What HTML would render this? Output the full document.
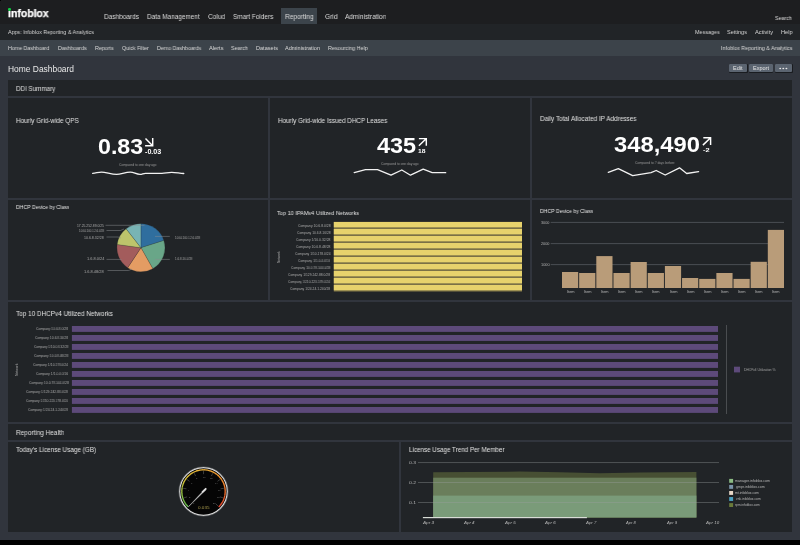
<!DOCTYPE html>
<html><head><meta charset="utf-8">
<style>
*{margin:0;padding:0;box-sizing:border-box}
html,body{width:800px;height:545px;overflow:hidden;background:#000}
body{font-family:"Liberation Sans",sans-serif;color:#e6e6e6;position:relative}
.a{position:absolute}
.t{position:absolute;white-space:nowrap;transform-origin:0 0;will-change:transform}
svg{position:absolute;left:0;top:0;overflow:visible}
</style></head><body>
<div class="a" style="left:0px;top:0px;width:800px;height:540px;background:#31353d;"></div>
<div class="a" style="left:0px;top:0px;width:800px;height:24px;background:#1d1e20;"></div>
<div class="a" style="left:0px;top:0px;width:1px;height:1px;background:#000;"></div>
<div class="a" style="left:0px;top:24px;width:800px;height:16px;background:#212427;"></div>
<div class="a" style="left:0px;top:40px;width:800px;height:16px;background:#3c434a;"></div>
<div class="t" style="left:7.77px;top:8.12px;font-size:10.610px;line-height:10.610px;font-weight:bold;color:#ffffff;transform:scaleX(0.9870);-webkit-text-stroke:0.25px #fff;">ınfoblox</div>
<div class="a" style="left:8.3px;top:8.3px;width:2.3px;height:2.3px;border-radius:50%;background:#12cc44"></div>
<div class="a" style="left:281px;top:8px;width:36px;height:16px;background:#3c444b;"></div>
<div class="t" style="left:103.63px;top:13.35px;font-size:7.267px;line-height:7.267px;font-weight:normal;color:#dcdcdc;transform:scaleX(0.8934);">Dashboards</div>
<div class="t" style="left:146.89px;top:13.35px;font-size:7.267px;line-height:7.267px;font-weight:normal;color:#dcdcdc;transform:scaleX(0.8824);">Data Management</div>
<div class="t" style="left:208.07px;top:13.35px;font-size:7.267px;line-height:7.267px;font-weight:normal;color:#dcdcdc;transform:scaleX(0.9027);">Colud</div>
<div class="t" style="left:232.91px;top:13.35px;font-size:7.267px;line-height:7.267px;font-weight:normal;color:#dcdcdc;transform:scaleX(0.8833);">Smart Folders</div>
<div class="t" style="left:284.97px;top:13.35px;font-size:7.267px;line-height:7.267px;font-weight:normal;color:#dcdcdc;transform:scaleX(0.9097);">Reporting</div>
<div class="t" style="left:325.07px;top:13.35px;font-size:7.267px;line-height:7.267px;font-weight:normal;color:#dcdcdc;transform:scaleX(0.9044);">Grid</div>
<div class="t" style="left:345.40px;top:13.35px;font-size:7.267px;line-height:7.267px;font-weight:normal;color:#dcdcdc;transform:scaleX(0.8991);">Administration</div>
<div class="t" style="left:774.96px;top:16.02px;font-size:5.523px;line-height:5.523px;font-weight:normal;color:#dcdcdc;transform:scaleX(0.9585);">Search</div>
<div class="t" style="left:8.10px;top:29.82px;font-size:5.523px;line-height:5.523px;font-weight:normal;color:#d4d4d4;transform:scaleX(0.9658);">Apps: Infoblox Reporting &amp; Analytics</div>
<div class="t" style="left:694.97px;top:29.82px;font-size:5.523px;line-height:5.523px;font-weight:normal;color:#d4d4d4;transform:scaleX(0.9776);">Messages</div>
<div class="t" style="left:726.96px;top:29.82px;font-size:5.523px;line-height:5.523px;font-weight:normal;color:#d4d4d4;transform:scaleX(0.9834);">Settings</div>
<div class="t" style="left:755.10px;top:29.82px;font-size:5.523px;line-height:5.523px;font-weight:normal;color:#d4d4d4;transform:scaleX(1.0346);">Activity</div>
<div class="t" style="left:780.65px;top:29.82px;font-size:5.523px;line-height:5.523px;font-weight:normal;color:#d4d4d4;transform:scaleX(1.0292);">Help</div>
<div class="t" style="left:8.08px;top:45.82px;font-size:5.523px;line-height:5.523px;font-weight:normal;color:#d8d8d8;transform:scaleX(0.9564);">Home Dashboard</div>
<div class="t" style="left:58.07px;top:45.82px;font-size:5.523px;line-height:5.523px;font-weight:normal;color:#d8d8d8;transform:scaleX(0.9662);">Dashboards</div>
<div class="t" style="left:94.97px;top:45.82px;font-size:5.523px;line-height:5.523px;font-weight:normal;color:#d8d8d8;transform:scaleX(0.9681);">Reports</div>
<div class="t" style="left:122.06px;top:45.82px;font-size:5.523px;line-height:5.523px;font-weight:normal;color:#d8d8d8;transform:scaleX(0.9632);">Quick Filter</div>
<div class="t" style="left:156.87px;top:45.82px;font-size:5.523px;line-height:5.523px;font-weight:normal;color:#d8d8d8;transform:scaleX(0.9619);">Demo Dashboards</div>
<div class="t" style="left:209.15px;top:45.82px;font-size:5.523px;line-height:5.523px;font-weight:normal;color:#d8d8d8;transform:scaleX(1.0310);">Alerts</div>
<div class="t" style="left:231.16px;top:45.82px;font-size:5.523px;line-height:5.523px;font-weight:normal;color:#d8d8d8;transform:scaleX(0.9615);">Search</div>
<div class="t" style="left:255.70px;top:45.82px;font-size:5.523px;line-height:5.523px;font-weight:normal;color:#d8d8d8;transform:scaleX(1.0093);">Datasets</div>
<div class="t" style="left:285.40px;top:45.82px;font-size:5.523px;line-height:5.523px;font-weight:normal;color:#d8d8d8;transform:scaleX(0.9868);">Administration</div>
<div class="t" style="left:327.87px;top:45.82px;font-size:5.523px;line-height:5.523px;font-weight:normal;color:#d8d8d8;transform:scaleX(0.9737);">Resourcing Help</div>
<div class="t" style="left:720.72px;top:45.82px;font-size:5.523px;line-height:5.523px;font-weight:normal;color:#d8d8d8;transform:scaleX(0.9754);">Infoblox Reporting &amp; Analytics</div>
<div class="t" style="left:8.22px;top:64.56px;font-size:8.430px;line-height:8.430px;font-weight:normal;color:#e8e8e8;">Home Dashboard</div>
<div class="a" style="left:728.5px;top:63.5px;width:19px;height:9px;background:#1a1c20;border-radius:1px"></div>
<div class="a" style="left:729px;top:64px;width:18px;height:8px;background:#5b6470;border-radius:1px"></div>
<div class="a" style="left:748.5px;top:63.5px;width:24.799999999999955px;height:9px;background:#1a1c20;border-radius:1px"></div>
<div class="a" style="left:749px;top:64px;width:23.8px;height:8px;background:#5b6470;border-radius:1px"></div>
<div class="a" style="left:774.5px;top:63.5px;width:18px;height:9px;background:#1a1c20;border-radius:1px"></div>
<div class="a" style="left:775px;top:64px;width:17px;height:8px;background:#5b6470;border-radius:1px"></div>
<div class="t" style="left:732.96px;top:66.32px;font-size:5.523px;line-height:5.523px;font-weight:normal;color:#e6e6e6;">Edit</div>
<div class="t" style="left:752.96px;top:66.32px;font-size:5.523px;line-height:5.523px;font-weight:normal;color:#e6e6e6;">Export</div>
<svg width="800" height="545"><g fill="#e8e8e8"><ellipse cx="780.2" cy="68.5" rx="0.95" ry="0.75"/><ellipse cx="783.3" cy="68.5" rx="0.95" ry="0.75"/><ellipse cx="786.4" cy="68.5" rx="0.95" ry="0.75"/></g></svg>
<div class="a" style="left:8px;top:80px;width:784px;height:16px;background:#212427;"></div>
<div class="t" style="left:15.70px;top:85.96px;font-size:6.541px;line-height:6.541px;font-weight:normal;color:#e0e0e0;transform:scaleX(0.9566);">DDI Summary</div>
<div class="a" style="left:8px;top:98px;width:260px;height:100px;background:#212427;"></div>
<div class="a" style="left:8px;top:200px;width:260px;height:100px;background:#212427;"></div>
<div class="a" style="left:270px;top:98px;width:260px;height:100px;background:#212427;"></div>
<div class="a" style="left:270px;top:200px;width:260px;height:100px;background:#212427;"></div>
<div class="a" style="left:532px;top:98px;width:260px;height:100px;background:#212427;"></div>
<div class="a" style="left:532px;top:200px;width:260px;height:100px;background:#212427;"></div>
<div class="a" style="left:8px;top:302px;width:784px;height:120px;background:#212427;"></div>
<div class="a" style="left:8px;top:424px;width:784px;height:16px;background:#212427;"></div>
<div class="t" style="left:16.49px;top:429.66px;font-size:6.904px;line-height:6.904px;font-weight:normal;color:#e0e0e0;transform:scaleX(0.9322);">Reporting Health</div>
<div class="a" style="left:8px;top:442px;width:391px;height:90px;background:#212427;"></div>
<div class="a" style="left:401px;top:442px;width:391px;height:90px;background:#212427;"></div>
<div class="t" style="left:16.09px;top:118.47px;font-size:7.122px;line-height:7.122px;font-weight:normal;color:#e2e2e2;transform:scaleX(0.8965);">Hourly Grid-wide QPS</div>
<div class="t" style="left:277.89px;top:117.67px;font-size:7.122px;line-height:7.122px;font-weight:normal;color:#e2e2e2;transform:scaleX(0.8899);">Hourly Grid-wide Issued DHCP Leases</div>
<div class="t" style="left:540.29px;top:116.32px;font-size:6.831px;line-height:6.831px;font-weight:normal;color:#e2e2e2;transform:scaleX(0.9368);">Daily Total Allocated IP Addresses</div>
<div class="t" style="left:97.97px;top:136.29px;font-size:21.221px;line-height:21.221px;font-weight:bold;color:#ffffff;transform:scaleX(1.0937);">0.83</div>
<div class="t" style="left:144.91px;top:148.76px;font-size:6.541px;line-height:6.541px;font-weight:bold;color:#ffffff;transform:scaleX(1.0955);">-0.03</div>
<div class="t" style="left:376.65px;top:135.04px;font-size:21.221px;line-height:21.221px;font-weight:bold;color:#ffffff;transform:scaleX(1.1049);">435</div>
<div class="t" style="left:417.99px;top:148.01px;font-size:6.250px;line-height:6.250px;font-weight:bold;color:#ffffff;transform:scaleX(1.0824);">18</div>
<div class="t" style="left:614.32px;top:134.34px;font-size:21.221px;line-height:21.221px;font-weight:bold;color:#ffffff;transform:scaleX(1.1201);">348,490</div>
<div class="t" style="left:703.10px;top:147.98px;font-size:5.814px;line-height:5.814px;font-weight:bold;color:#ffffff;transform:scaleX(1.2741);">-2</div>
<div class="t" style="left:119.34px;top:163.85px;font-size:3.488px;line-height:3.488px;font-weight:normal;color:#9a9a9a;transform:scaleX(0.9343);">Compared to one day ago</div>
<div class="t" style="left:381.24px;top:162.55px;font-size:3.488px;line-height:3.488px;font-weight:normal;color:#9a9a9a;transform:scaleX(0.9368);">Compared to one day ago</div>
<div class="t" style="left:635.04px;top:161.75px;font-size:3.488px;line-height:3.488px;font-weight:normal;color:#9a9a9a;transform:scaleX(0.9393);">Compared to 7 days before</div>
<svg width="800" height="545"><g stroke="#fff" stroke-width="1.45" fill="none" stroke-linecap="butt"><path d="M145.5 138.6 L152.4 145.5 M145.1 145.8 H153.3 M152.7 138.1 V146.4"/><path d="M418.9 145.7 L426.1 138.7 M418.9 138.6 H427.0 M426.3 138.0 V145.8"/><path d="M702.9 145.1 L710.6 137.8 M703.3 137.8 H711.2 M710.6 137.2 V144.9"/></g><g stroke="#f2f2f2" stroke-width="1.3" fill="none" stroke-linejoin="round" stroke-linecap="round"><path d="M92.6 173.3 C96 173.2 98 172.1 101.5 172.1 C106 172.1 111 174.4 116.6 174.4 C121 174.4 125 172.1 130.4 172.1 C134 172.1 136 174.4 140 174.4 C142.5 174.4 143 173.3 145.5 173.3 L162 173.3 C165 173.3 168 172.4 171.7 172.4 C176 172.4 180 173.5 183.8 173.5"/><path d="M354.2 172.7 L365.5 169.7 L377.5 169.7 L391 175.2 L401.8 170 L410.5 175.2 L423.2 169.2 L432.2 172.7 L445.7 172.7"/><path d="M608.25 172.3 L618.3 168.7 L632.7 175.7 L651 172.7 L656.2 170.5 L665.2 175 L679.5 167.8 L686.7 173.5 L698.6 171.7"/></g></svg>
<div class="t" style="left:15.98px;top:204.66px;font-size:5.959px;line-height:5.959px;font-weight:normal;color:#e2e2e2;transform:scaleX(0.8767);">DHCP Device by Class</div>
<svg width="800" height="545"><path d="M140.95 247.75 L140.95 223.75 A24 24 0 0 1 163.81 240.45 Z" fill="#2f6e9e" stroke="#2a2d30" stroke-width="0.2"/><path d="M140.95 247.75 L163.81 240.45 A24 24 0 0 1 152.77 268.64 Z" fill="#69a688" stroke="#2a2d30" stroke-width="0.2"/><path d="M140.95 247.75 L152.77 268.64 A24 24 0 0 1 127.70 267.76 Z" fill="#e49c63" stroke="#2a2d30" stroke-width="0.2"/><path d="M140.95 247.75 L127.70 267.76 A24 24 0 0 1 117.18 244.45 Z" fill="#a35c5c" stroke="#2a2d30" stroke-width="0.2"/><path d="M140.95 247.75 L117.18 244.45 A24 24 0 0 1 126.17 228.84 Z" fill="#bdc46b" stroke="#2a2d30" stroke-width="0.2"/><path d="M140.95 247.75 L126.17 228.84 A24 24 0 0 1 140.95 223.75 Z" fill="#78b4b4" stroke="#2a2d30" stroke-width="0.2"/><g stroke="#8a8d90" stroke-width="0.5" fill="none"><path d="M105.5 225.3 H144.5 M106.5 230.5 H120.5 L124 229 M106.5 237 H118 L121 238 M106.5 259.4 H121.5 M107.5 270.5 H128.5 L132 269 M155 236.4 H169.8 M155 259.4 H169.8"/></g><rect x="333.8" y="221.9" width="188.2" height="69.7" fill="#756c45"/><rect x="333.8" y="221.95" width="188.2" height="5.4" fill="#e7d26c"/><rect x="333.8" y="228.95" width="188.2" height="5.4" fill="#e7d26c"/><rect x="333.8" y="235.95" width="188.2" height="5.4" fill="#e7d26c"/><rect x="333.8" y="242.95" width="188.2" height="5.4" fill="#e7d26c"/><rect x="333.8" y="249.95" width="188.2" height="5.4" fill="#e7d26c"/><rect x="333.8" y="256.95" width="188.2" height="5.4" fill="#e7d26c"/><rect x="333.8" y="263.95" width="188.2" height="5.4" fill="#e7d26c"/><rect x="333.8" y="270.95" width="188.2" height="5.4" fill="#e7d26c"/><rect x="333.8" y="277.95" width="188.2" height="5.4" fill="#e7d26c"/><rect x="333.8" y="284.95" width="188.2" height="5.4" fill="#e7d26c"/><rect x="550.7" y="221.9" width="233.3" height="1" fill="#4a4e54"/><rect x="550.7" y="243.1" width="233.3" height="1" fill="#4a4e54"/><rect x="550.7" y="264.1" width="233.3" height="1" fill="#4a4e54"/><rect x="562.00" y="272" width="16.2" height="16.0" fill="#b99c79"/><rect x="579.15" y="273" width="16.2" height="15.0" fill="#b99c79"/><rect x="596.30" y="256.1" width="16.2" height="31.9" fill="#b99c79"/><rect x="613.45" y="273" width="16.2" height="15.0" fill="#b99c79"/><rect x="630.60" y="262" width="16.2" height="26.0" fill="#b99c79"/><rect x="647.75" y="273" width="16.2" height="15.0" fill="#b99c79"/><rect x="664.90" y="266" width="16.2" height="22.0" fill="#b99c79"/><rect x="682.05" y="278" width="16.2" height="10.0" fill="#b99c79"/><rect x="699.20" y="278.9" width="16.2" height="9.1" fill="#b99c79"/><rect x="716.35" y="273" width="16.2" height="15.0" fill="#b99c79"/><rect x="733.50" y="278.9" width="16.2" height="9.1" fill="#b99c79"/><rect x="750.65" y="261.8" width="16.2" height="26.2" fill="#b99c79"/><rect x="767.80" y="229.9" width="16.2" height="58.1" fill="#b99c79"/></svg>
<div class="t" style="left:77.15px;top:224.72px;font-size:3.052px;line-height:3.052px;font-weight:normal;color:#a8a8a8;transform:scaleX(1.0969);">17.25.252.89.0/25</div>
<div class="t" style="left:78.94px;top:230.47px;font-size:3.052px;line-height:3.052px;font-weight:normal;color:#a8a8a8;transform:scaleX(0.8986);">10.64.100.1.2.6.0/28</div>
<div class="t" style="left:84.48px;top:236.62px;font-size:3.052px;line-height:3.052px;font-weight:normal;color:#a8a8a8;transform:scaleX(1.1582);">10.6.8.32/28</div>
<div class="t" style="left:86.71px;top:258.47px;font-size:3.052px;line-height:3.052px;font-weight:normal;color:#a8a8a8;transform:scaleX(1.2818);">1.6.8.0/24</div>
<div class="t" style="left:84.45px;top:270.72px;font-size:3.052px;line-height:3.052px;font-weight:normal;color:#a8a8a8;transform:scaleX(1.2897);">1.6.8.48/28</div>
<div class="t" style="left:174.89px;top:236.62px;font-size:3.052px;line-height:3.052px;font-weight:normal;color:#a8a8a8;transform:scaleX(0.8968);">10.64.100.1.2.6.0/28</div>
<div class="t" style="left:174.88px;top:258.47px;font-size:3.052px;line-height:3.052px;font-weight:normal;color:#a8a8a8;transform:scaleX(0.9680);">1.6.8.16.0/28</div>
<div class="t" style="left:277.24px;top:209.57px;font-size:6.177px;line-height:6.177px;font-weight:normal;color:#e2e2e2;transform:scaleX(0.9063);">Top 10 IPAMv4 Utilized Networks</div>
<div class="t" style="left:297.73px;top:225.17px;font-size:3.343px;line-height:3.343px;font-weight:normal;color:#aaaaaa;transform:scaleX(1.0266);">Company 10.6.8.0/28</div>
<div class="t" style="left:296.83px;top:232.17px;font-size:3.343px;line-height:3.343px;font-weight:normal;color:#aaaaaa;">Company 10.6.8.16/28</div>
<div class="t" style="left:295.93px;top:239.17px;font-size:3.343px;line-height:3.343px;font-weight:normal;color:#aaaaaa;transform:scaleX(1.0235);">Company 1/10.0.32/28</div>
<div class="t" style="left:295.93px;top:246.17px;font-size:3.343px;line-height:3.343px;font-weight:normal;color:#aaaaaa;transform:scaleX(1.0235);">Company 10.0.8.48/28</div>
<div class="t" style="left:295.03px;top:253.17px;font-size:3.343px;line-height:3.343px;font-weight:normal;color:#aaaaaa;transform:scaleX(0.9933);">Company 1/10.178.0/24</div>
<div class="t" style="left:298.14px;top:260.17px;font-size:3.343px;line-height:3.343px;font-weight:normal;color:#aaaaaa;transform:scaleX(0.9848);">Company 1/1.0.4.0/16</div>
<div class="t" style="left:290.84px;top:267.17px;font-size:3.343px;line-height:3.343px;font-weight:normal;color:#aaaaaa;transform:scaleX(0.9842);">Company 10.0.78.144.0/28</div>
<div class="t" style="left:288.23px;top:274.17px;font-size:3.343px;line-height:3.343px;font-weight:normal;color:#aaaaaa;">Company 1/129.242.88.0/28</div>
<div class="t" style="left:288.24px;top:281.17px;font-size:3.343px;line-height:3.343px;font-weight:normal;color:#aaaaaa;transform:scaleX(0.9590);">Company 1/210.223.178.0/24</div>
<div class="t" style="left:290.03px;top:288.17px;font-size:3.343px;line-height:3.343px;font-weight:normal;color:#aaaaaa;">Company 1/24.24.1.240/28</div>
<div class="t" style="left:277.8px;top:263.3px;font-size:3.2px;line-height:3.2px;color:#aaa;transform:rotate(-90deg);transform-origin:0 0">Network</div>
<div class="t" style="left:540.28px;top:209.46px;font-size:5.959px;line-height:5.959px;font-weight:normal;color:#e2e2e2;transform:scaleX(0.8733);">DHCP Device by Class</div>
<div class="t" style="left:540.97px;top:222.17px;font-size:3.343px;line-height:3.343px;font-weight:normal;color:#b0b0b0;transform:scaleX(1.1382);">3000</div>
<div class="t" style="left:540.91px;top:243.17px;font-size:3.343px;line-height:3.343px;font-weight:normal;color:#b0b0b0;transform:scaleX(1.1462);">2000</div>
<div class="t" style="left:540.81px;top:264.17px;font-size:3.343px;line-height:3.343px;font-weight:normal;color:#b0b0b0;transform:scaleX(1.1597);">1000</div>
<div class="t" style="left:566.65px;top:290.69px;font-size:3.198px;line-height:3.198px;font-weight:normal;color:#b8b8b8;transform:scaleX(1.2230);">Item</div>
<div class="t" style="left:583.80px;top:290.69px;font-size:3.198px;line-height:3.198px;font-weight:normal;color:#b8b8b8;transform:scaleX(1.2230);">Item</div>
<div class="t" style="left:600.95px;top:290.69px;font-size:3.198px;line-height:3.198px;font-weight:normal;color:#b8b8b8;transform:scaleX(1.2230);">Item</div>
<div class="t" style="left:618.10px;top:290.69px;font-size:3.198px;line-height:3.198px;font-weight:normal;color:#b8b8b8;transform:scaleX(1.2230);">Item</div>
<div class="t" style="left:635.25px;top:290.69px;font-size:3.198px;line-height:3.198px;font-weight:normal;color:#b8b8b8;transform:scaleX(1.2230);">Item</div>
<div class="t" style="left:652.40px;top:290.69px;font-size:3.198px;line-height:3.198px;font-weight:normal;color:#b8b8b8;transform:scaleX(1.2230);">Item</div>
<div class="t" style="left:669.55px;top:290.69px;font-size:3.198px;line-height:3.198px;font-weight:normal;color:#b8b8b8;transform:scaleX(1.2230);">Item</div>
<div class="t" style="left:686.70px;top:290.69px;font-size:3.198px;line-height:3.198px;font-weight:normal;color:#b8b8b8;transform:scaleX(1.2230);">Item</div>
<div class="t" style="left:703.85px;top:290.69px;font-size:3.198px;line-height:3.198px;font-weight:normal;color:#b8b8b8;transform:scaleX(1.2230);">Item</div>
<div class="t" style="left:721.00px;top:290.69px;font-size:3.198px;line-height:3.198px;font-weight:normal;color:#b8b8b8;transform:scaleX(1.2230);">Item</div>
<div class="t" style="left:738.15px;top:290.69px;font-size:3.198px;line-height:3.198px;font-weight:normal;color:#b8b8b8;transform:scaleX(1.2230);">Item</div>
<div class="t" style="left:755.30px;top:290.69px;font-size:3.198px;line-height:3.198px;font-weight:normal;color:#b8b8b8;transform:scaleX(1.2230);">Item</div>
<div class="t" style="left:772.45px;top:290.69px;font-size:3.198px;line-height:3.198px;font-weight:normal;color:#b8b8b8;transform:scaleX(1.2230);">Item</div>
<div class="t" style="left:15.54px;top:310.72px;font-size:7.122px;line-height:7.122px;font-weight:normal;color:#e2e2e2;transform:scaleX(0.8986);">Top 10 DHCPv4 Utilized Networks</div>
<svg width="800" height="545"><rect x="71.9" y="326" width="646.1" height="5.9" fill="#5d4a7a"/><rect x="71.9" y="335" width="646.1" height="5.9" fill="#5d4a7a"/><rect x="71.9" y="344" width="646.1" height="5.9" fill="#5d4a7a"/><rect x="71.9" y="353" width="646.1" height="5.9" fill="#5d4a7a"/><rect x="71.9" y="362" width="646.1" height="5.9" fill="#5d4a7a"/><rect x="71.9" y="371" width="646.1" height="5.9" fill="#5d4a7a"/><rect x="71.9" y="380" width="646.1" height="5.9" fill="#5d4a7a"/><rect x="71.9" y="389" width="646.1" height="5.9" fill="#5d4a7a"/><rect x="71.9" y="398" width="646.1" height="5.9" fill="#5d4a7a"/><rect x="71.9" y="407" width="646.1" height="5.9" fill="#5d4a7a"/><rect x="726.2" y="325" width="0.8" height="89" fill="#55585c"/><rect x="734" y="366.7" width="6" height="5.7" fill="#5d4a7a"/></svg>
<div class="t" style="left:36.23px;top:327.95px;font-size:3.488px;line-height:3.488px;font-weight:normal;color:#ababab;transform:scaleX(0.9687);">Company 10.6.8.0/28</div>
<div class="t" style="left:35.24px;top:336.95px;font-size:3.488px;line-height:3.488px;font-weight:normal;color:#ababab;transform:scaleX(0.9436);">Company 10.6.8.16/28</div>
<div class="t" style="left:33.94px;top:345.95px;font-size:3.488px;line-height:3.488px;font-weight:normal;color:#ababab;transform:scaleX(0.9054);">Company 1/10.0.8.32/28</div>
<div class="t" style="left:33.93px;top:354.95px;font-size:3.488px;line-height:3.488px;font-weight:normal;color:#ababab;transform:scaleX(0.9808);">Company 10.0.8.48/28</div>
<div class="t" style="left:33.23px;top:363.95px;font-size:3.488px;line-height:3.488px;font-weight:normal;color:#ababab;transform:scaleX(0.9465);">Company 1/10.178.0/24</div>
<div class="t" style="left:36.24px;top:372.95px;font-size:3.488px;line-height:3.488px;font-weight:normal;color:#ababab;transform:scaleX(0.9409);">Company 1/1.0.4.0/16</div>
<div class="t" style="left:28.53px;top:381.95px;font-size:3.488px;line-height:3.488px;font-weight:normal;color:#ababab;transform:scaleX(0.9504);">Company 10.0.78.144.0/28</div>
<div class="t" style="left:26.23px;top:390.95px;font-size:3.488px;line-height:3.488px;font-weight:normal;color:#ababab;transform:scaleX(0.9609);">Company 1/129.242.88.0/28</div>
<div class="t" style="left:26.24px;top:399.95px;font-size:3.488px;line-height:3.488px;font-weight:normal;color:#ababab;transform:scaleX(0.9191);">Company 1/210.223.178.0/24</div>
<div class="t" style="left:28.13px;top:408.95px;font-size:3.488px;line-height:3.488px;font-weight:normal;color:#ababab;transform:scaleX(0.9599);">Company 1/24.24.1.240/28</div>
<div class="t" style="left:16.4px;top:375.5px;font-size:3.4px;line-height:3.4px;color:#aaa;transform:rotate(-90deg);transform-origin:0 0">Network</div>
<div class="t" style="left:744.14px;top:369.15px;font-size:3.488px;line-height:3.488px;font-weight:normal;color:#a4a4a4;transform:scaleX(0.9361);">DHCPv4 Utilization %</div>
<div class="t" style="left:15.55px;top:446.64px;font-size:6.686px;line-height:6.686px;font-weight:normal;color:#e2e2e2;transform:scaleX(0.9494);">Today's License Usage (GB)</div>
<div class="t" style="left:409.40px;top:447.04px;font-size:6.686px;line-height:6.686px;font-weight:normal;color:#e2e2e2;transform:scaleX(0.9388);">License Usage Trend Per Member</div>
<svg width="800" height="545"><circle cx="203.5" cy="491.5" r="23.8" fill="#050505" stroke="#e2e2e2" stroke-width="1.2"/><circle cx="203.5" cy="491.5" r="24.6" fill="none" stroke="#77797b" stroke-width="0.5"/><path d="M188.16 506.84 A21.7 21.7 0 0 1 186.73 505.27" stroke="rgb(99, 186, 75)" stroke-width="1.35" fill="none"/><path d="M186.88 505.45 A21.7 21.7 0 0 1 185.60 503.76" stroke="rgb(105, 187, 74)" stroke-width="1.35" fill="none"/><path d="M185.72 503.95 A21.7 21.7 0 0 1 184.59 502.15" stroke="rgb(111, 189, 73)" stroke-width="1.35" fill="none"/><path d="M184.71 502.35 A21.7 21.7 0 0 1 183.74 500.46" stroke="rgb(118, 190, 72)" stroke-width="1.35" fill="none"/><path d="M183.83 500.67 A21.7 21.7 0 0 1 183.03 498.71" stroke="rgb(124, 192, 72)" stroke-width="1.35" fill="none"/><path d="M183.11 498.92 A21.7 21.7 0 0 1 182.48 496.90" stroke="rgb(131, 193, 71)" stroke-width="1.35" fill="none"/><path d="M182.54 497.12 A21.7 21.7 0 0 1 182.09 495.04" stroke="rgb(137, 194, 70)" stroke-width="1.35" fill="none"/><path d="M182.13 495.27 A21.7 21.7 0 0 1 181.86 493.16" stroke="rgb(145, 195, 69)" stroke-width="1.35" fill="none"/><path d="M181.88 493.39 A21.7 21.7 0 0 1 181.80 491.27" stroke="rgb(155, 195, 68)" stroke-width="1.35" fill="none"/><path d="M181.80 491.50 A21.7 21.7 0 0 1 181.90 489.38" stroke="rgb(164, 195, 67)" stroke-width="1.35" fill="none"/><path d="M181.88 489.61 A21.7 21.7 0 0 1 182.17 487.51" stroke="rgb(173, 195, 66)" stroke-width="1.35" fill="none"/><path d="M182.13 487.73 A21.7 21.7 0 0 1 182.60 485.66" stroke="rgb(183, 195, 64)" stroke-width="1.35" fill="none"/><path d="M182.54 485.88 A21.7 21.7 0 0 1 183.19 483.87" stroke="rgb(192, 195, 63)" stroke-width="1.35" fill="none"/><path d="M183.11 484.08 A21.7 21.7 0 0 1 183.93 482.12" stroke="rgb(202, 195, 62)" stroke-width="1.35" fill="none"/><path d="M183.83 482.33 A21.7 21.7 0 0 1 184.82 480.45" stroke="rgb(211, 195, 61)" stroke-width="1.35" fill="none"/><path d="M184.71 480.65 A21.7 21.7 0 0 1 185.86 478.87" stroke="rgb(216, 194, 60)" stroke-width="1.35" fill="none"/><path d="M185.72 479.05 A21.7 21.7 0 0 1 187.02 477.38" stroke="rgb(218, 192, 59)" stroke-width="1.35" fill="none"/><path d="M186.88 477.55 A21.7 21.7 0 0 1 188.32 476.00" stroke="rgb(219, 191, 59)" stroke-width="1.35" fill="none"/><path d="M188.16 476.16 A21.7 21.7 0 0 1 189.73 474.73" stroke="rgb(221, 189, 59)" stroke-width="1.35" fill="none"/><path d="M189.55 474.88 A21.7 21.7 0 0 1 191.24 473.60" stroke="rgb(223, 187, 58)" stroke-width="1.35" fill="none"/><path d="M191.05 473.72 A21.7 21.7 0 0 1 192.85 472.59" stroke="rgb(224, 186, 58)" stroke-width="1.35" fill="none"/><path d="M192.65 472.71 A21.7 21.7 0 0 1 194.54 471.74" stroke="rgb(226, 184, 57)" stroke-width="1.35" fill="none"/><path d="M194.33 471.83 A21.7 21.7 0 0 1 196.29 471.03" stroke="rgb(228, 182, 57)" stroke-width="1.35" fill="none"/><path d="M196.08 471.11 A21.7 21.7 0 0 1 198.10 470.48" stroke="rgb(229, 181, 56)" stroke-width="1.35" fill="none"/><path d="M197.88 470.54 A21.7 21.7 0 0 1 199.96 470.09" stroke="rgb(231, 179, 56)" stroke-width="1.35" fill="none"/><path d="M199.73 470.13 A21.7 21.7 0 0 1 201.84 469.86" stroke="rgb(233, 177, 56)" stroke-width="1.35" fill="none"/><path d="M201.61 469.88 A21.7 21.7 0 0 1 203.73 469.80" stroke="rgb(234, 176, 55)" stroke-width="1.35" fill="none"/><path d="M203.50 469.80 A21.7 21.7 0 0 1 205.62 469.90" stroke="rgb(235, 173, 55)" stroke-width="1.35" fill="none"/><path d="M205.39 469.88 A21.7 21.7 0 0 1 207.49 470.17" stroke="rgb(236, 170, 54)" stroke-width="1.35" fill="none"/><path d="M207.27 470.13 A21.7 21.7 0 0 1 209.34 470.60" stroke="rgb(236, 168, 53)" stroke-width="1.35" fill="none"/><path d="M209.12 470.54 A21.7 21.7 0 0 1 211.13 471.19" stroke="rgb(236, 165, 52)" stroke-width="1.35" fill="none"/><path d="M210.92 471.11 A21.7 21.7 0 0 1 212.88 471.93" stroke="rgb(237, 162, 51)" stroke-width="1.35" fill="none"/><path d="M212.67 471.83 A21.7 21.7 0 0 1 214.55 472.82" stroke="rgb(237, 159, 50)" stroke-width="1.35" fill="none"/><path d="M214.35 472.71 A21.7 21.7 0 0 1 216.13 473.86" stroke="rgb(238, 156, 50)" stroke-width="1.35" fill="none"/><path d="M215.95 473.72 A21.7 21.7 0 0 1 217.62 475.02" stroke="rgb(238, 153, 49)" stroke-width="1.35" fill="none"/><path d="M217.45 474.88 A21.7 21.7 0 0 1 219.00 476.32" stroke="rgb(239, 150, 48)" stroke-width="1.35" fill="none"/><path d="M218.84 476.16 A21.7 21.7 0 0 1 220.27 477.73" stroke="rgb(239, 147, 47)" stroke-width="1.35" fill="none"/><path d="M220.12 477.55 A21.7 21.7 0 0 1 221.40 479.24" stroke="rgb(239, 144, 46)" stroke-width="1.35" fill="none"/><path d="M221.28 479.05 A21.7 21.7 0 0 1 222.41 480.85" stroke="rgb(240, 141, 45)" stroke-width="1.35" fill="none"/><path d="M222.29 480.65 A21.7 21.7 0 0 1 223.26 482.54" stroke="rgb(240, 138, 45)" stroke-width="1.35" fill="none"/><path d="M223.17 482.33 A21.7 21.7 0 0 1 223.97 484.29" stroke="rgb(239, 133, 45)" stroke-width="1.35" fill="none"/><path d="M223.89 484.08 A21.7 21.7 0 0 1 224.52 486.10" stroke="rgb(239, 129, 45)" stroke-width="1.35" fill="none"/><path d="M224.46 485.88 A21.7 21.7 0 0 1 224.91 487.96" stroke="rgb(238, 124, 45)" stroke-width="1.35" fill="none"/><path d="M224.87 487.73 A21.7 21.7 0 0 1 225.14 489.84" stroke="rgb(237, 120, 45)" stroke-width="1.35" fill="none"/><path d="M225.12 489.61 A21.7 21.7 0 0 1 225.20 491.73" stroke="rgb(237, 115, 45)" stroke-width="1.35" fill="none"/><path d="M225.20 491.50 A21.7 21.7 0 0 1 225.10 493.62" stroke="rgb(236, 111, 45)" stroke-width="1.35" fill="none"/><path d="M225.12 493.39 A21.7 21.7 0 0 1 224.83 495.49" stroke="rgb(236, 106, 45)" stroke-width="1.35" fill="none"/><path d="M224.87 495.27 A21.7 21.7 0 0 1 224.40 497.34" stroke="rgb(235, 102, 45)" stroke-width="1.35" fill="none"/><path d="M224.46 497.12 A21.7 21.7 0 0 1 223.81 499.13" stroke="rgb(234, 97, 45)" stroke-width="1.35" fill="none"/><path d="M223.89 498.92 A21.7 21.7 0 0 1 223.07 500.88" stroke="rgb(231, 91, 45)" stroke-width="1.35" fill="none"/><path d="M223.17 500.67 A21.7 21.7 0 0 1 222.18 502.55" stroke="rgb(229, 85, 45)" stroke-width="1.35" fill="none"/><path d="M222.29 502.35 A21.7 21.7 0 0 1 221.14 504.13" stroke="rgb(226, 79, 45)" stroke-width="1.35" fill="none"/><path d="M221.28 503.95 A21.7 21.7 0 0 1 219.98 505.62" stroke="rgb(224, 73, 45)" stroke-width="1.35" fill="none"/><path d="M220.12 505.45 A21.7 21.7 0 0 1 218.68 507.00" stroke="rgb(221, 68, 45)" stroke-width="1.35" fill="none"/><path d="M191.27 503.73 L188.93 506.07 M187.05 496.85 L183.91 497.87 M186.41 488.79 L183.15 488.28 M189.50 481.33 L186.83 479.39 M195.65 476.09 L194.15 473.15 M203.50 474.20 L203.50 470.90 M211.35 476.09 L212.85 473.15 M217.50 481.33 L220.17 479.39 M220.59 488.79 L223.85 488.28 M219.95 496.85 L223.09 497.87 M215.73 503.73 L218.07 506.07" stroke="#8c8c8c" stroke-width="0.4"/><path d="M188.0 507.2 L204.4 489.4 L206.2 488.5 L205.5 490.3 Z" fill="#cfcfcf" stroke="#cfcfcf" stroke-width="0.3" stroke-linejoin="round"/><path d="M201.5 491.8 L205.6 487.7 L206.8 488.9 L202.7 493.0 Z" fill="#dedede"/></svg>
<div class="t" style="left:192.51px;top:501.70px;font-size:2.180px;line-height:2.180px;font-weight:normal;color:#777777;transform:scaleX(1.0511);">0</div>
<div class="t" style="left:188.77px;top:495.65px;font-size:2.180px;line-height:2.180px;font-weight:normal;color:#777777;transform:scaleX(1.1089);">2</div>
<div class="t" style="left:188.29px;top:488.58px;font-size:2.180px;line-height:2.180px;font-weight:normal;color:#777777;transform:scaleX(0.9893);">4</div>
<div class="t" style="left:190.93px;top:482.02px;font-size:2.180px;line-height:2.180px;font-weight:normal;color:#777777;transform:scaleX(1.0850);">6</div>
<div class="t" style="left:196.36px;top:477.41px;font-size:2.180px;line-height:2.180px;font-weight:normal;color:#777777;transform:scaleX(1.0622);">8</div>
<div class="t" style="left:202.64px;top:475.75px;font-size:2.180px;line-height:2.180px;font-weight:normal;color:#777777;transform:scaleX(1.0091);">10</div>
<div class="t" style="left:209.53px;top:477.41px;font-size:2.180px;line-height:2.180px;font-weight:normal;color:#777777;transform:scaleX(1.0244);">12</div>
<div class="t" style="left:214.93px;top:482.02px;font-size:2.180px;line-height:2.180px;font-weight:normal;color:#777777;">14</div>
<div class="t" style="left:217.65px;top:488.58px;font-size:2.180px;line-height:2.180px;font-weight:normal;color:#777777;transform:scaleX(1.0141);">16</div>
<div class="t" style="left:217.09px;top:495.65px;font-size:2.180px;line-height:2.180px;font-weight:normal;color:#777777;transform:scaleX(1.0141);">18</div>
<div class="t" style="left:213.44px;top:501.70px;font-size:2.180px;line-height:2.180px;font-weight:normal;color:#777777;transform:scaleX(0.9845);">20</div>
<div class="t" style="left:198.21px;top:506.72px;font-size:3.634px;line-height:3.634px;font-weight:normal;color:#a89a4c;transform:scaleX(1.2737);">0.035</div>
<svg width="800" height="545"><path d="M433.2 517.5 V472.2 L470 471.9 L520 471.6 L560 472.2 L600 473.3 L640 472.4 L696.4 471.9 V517.5 Z" fill="#474f33"/><rect x="433.2" y="477.7" width="263.2" height="39.8" fill="#6a7e5b"/><rect x="433.2" y="495.6" width="263.2" height="21.9" fill="#7a9b79"/><rect x="418" y="462.15000000000003" width="301" height="0.9" fill="#9a9fa0" fill-opacity="0.42"/><rect x="418" y="482.05" width="301" height="0.9" fill="#9a9fa0" fill-opacity="0.42"/><rect x="418" y="502.05" width="301" height="0.9" fill="#9a9fa0" fill-opacity="0.42"/><rect x="422.9" y="517.0" width="164" height="1.2" fill="#d8dcd6"/><rect x="729.2" y="478.90" width="3.9" height="3.9" fill="#8cbc84"/><rect x="729.2" y="484.95" width="3.9" height="3.9" fill="#7a93a8"/><rect x="729.2" y="491.00" width="3.9" height="3.9" fill="#e8d8c8"/><rect x="729.2" y="497.05" width="3.9" height="3.9" fill="#4aa0c0"/><rect x="729.2" y="503.10" width="3.9" height="3.9" fill="#6a7a3a"/></svg>
<div class="t" style="left:409.30px;top:462.39px;font-size:3.198px;line-height:3.198px;font-weight:normal;color:#b4b4b4;transform:scaleX(1.5756);">0.3</div>
<div class="t" style="left:409.30px;top:482.29px;font-size:3.198px;line-height:3.198px;font-weight:normal;color:#b4b4b4;transform:scaleX(1.5877);">0.2</div>
<div class="t" style="left:409.30px;top:502.29px;font-size:3.198px;line-height:3.198px;font-weight:normal;color:#b4b4b4;transform:scaleX(1.5816);">0.1</div>
<div class="t" style="left:423.30px;top:521.90px;font-size:3.779px;line-height:3.779px;font-weight:normal;color:#b8b8b8;transform:scaleX(1.2386);font-style:italic;">Apr 3</div>
<div class="t" style="left:464.10px;top:521.90px;font-size:3.779px;line-height:3.779px;font-weight:normal;color:#b8b8b8;transform:scaleX(1.1748);font-style:italic;">Apr 4</div>
<div class="t" style="left:504.70px;top:521.90px;font-size:3.779px;line-height:3.779px;font-weight:normal;color:#b8b8b8;transform:scaleX(1.1823);font-style:italic;">Apr 5</div>
<div class="t" style="left:545.40px;top:521.90px;font-size:3.779px;line-height:3.779px;font-weight:normal;color:#b8b8b8;transform:scaleX(1.1823);font-style:italic;">Apr 6</div>
<div class="t" style="left:585.90px;top:521.90px;font-size:3.779px;line-height:3.779px;font-weight:normal;color:#b8b8b8;transform:scaleX(1.1566);font-style:italic;">Apr 7</div>
<div class="t" style="left:625.80px;top:521.90px;font-size:3.779px;line-height:3.779px;font-weight:normal;color:#b8b8b8;transform:scaleX(1.0810);font-style:italic;">Apr 8</div>
<div class="t" style="left:666.90px;top:521.90px;font-size:3.779px;line-height:3.779px;font-weight:normal;color:#b8b8b8;transform:scaleX(1.1171);font-style:italic;">Apr 9</div>
<div class="t" style="left:706.40px;top:521.90px;font-size:3.779px;line-height:3.779px;font-weight:normal;color:#b8b8b8;transform:scaleX(1.1821);font-style:italic;">Apr 10</div>
<div class="t" style="left:735.47px;top:479.79px;font-size:3.198px;line-height:3.198px;font-weight:normal;color:#b8b8b8;transform:scaleX(1.1239);">manager.infoblox.com</div>
<div class="t" style="left:735.56px;top:485.84px;font-size:3.198px;line-height:3.198px;font-weight:normal;color:#b8b8b8;transform:scaleX(1.1127);">gmpr.infoblox.com</div>
<div class="t" style="left:735.48px;top:491.89px;font-size:3.198px;line-height:3.198px;font-weight:normal;color:#b8b8b8;transform:scaleX(1.0690);">mt.infoblox.com</div>
<div class="t" style="left:735.65px;top:497.94px;font-size:3.198px;line-height:3.198px;font-weight:normal;color:#b8b8b8;transform:scaleX(1.0396);">vnk.infoblox.com</div>
<div class="t" style="left:735.49px;top:503.99px;font-size:3.198px;line-height:3.198px;font-weight:normal;color:#b8b8b8;transform:scaleX(1.0236);">rpm.infoblox.com</div>
</body></html>
